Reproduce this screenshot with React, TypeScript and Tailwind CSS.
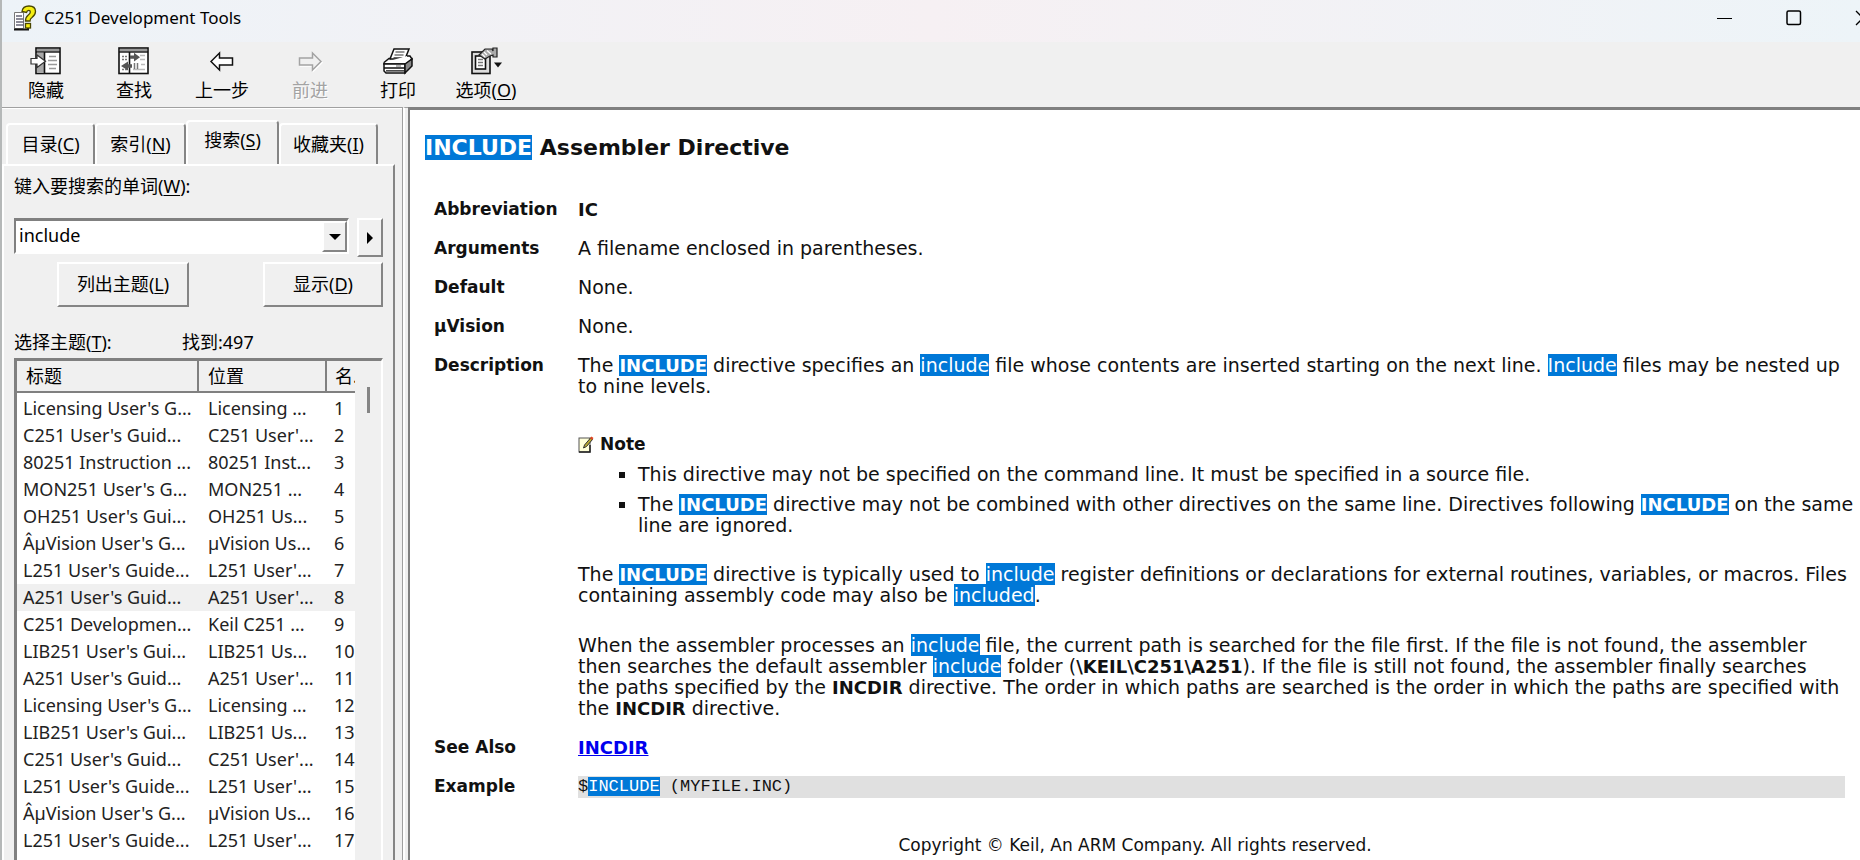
import type { ReactNode } from "react";

const rows: [string, string][] = [
  ["Licensing User's G...", "Licensing ..."],
  ["C251 User's Guid...", "C251 User'..."],
  ["80251 Instruction ...", "80251 Inst..."],
  ["MON251 User's G...", "MON251 ..."],
  ["OH251 User's Gui...", "OH251 Us..."],
  ["ÂµVision User's G...", "µVision Us..."],
  ["L251 User's Guide...", "L251 User'..."],
  ["A251 User's Guid...", "A251 User'..."],
  ["C251 Developmen...", "Keil C251 ..."],
  ["LIB251 User's Gui...", "LIB251 Us..."],
  ["A251 User's Guid...", "A251 User'..."],
  ["Licensing User's G...", "Licensing ..."],
  ["LIB251 User's Gui...", "LIB251 Us..."],
  ["C251 User's Guid...", "C251 User'..."],
  ["L251 User's Guide...", "L251 User'..."],
  ["ÂµVision User's G...", "µVision Us..."],
  ["L251 User's Guide...", "L251 User'..."],
  ["C251 User's Guid...", "C251 User'..."],
];

function Hit({ children }: { children: ReactNode }) {
  return <mark className="bg-[#0078d7] text-white">{children}</mark>;
}

function Strong({ children }: { children: ReactNode }) {
  return <b className="text-[18px]">{children}</b>;
}

function HelpIcon() {
  return (
    <svg width="24" height="26" viewBox="0 0 24 26" aria-hidden="true">
      <path d="M1.5 7.5h9v16h-9z" fill="#fff" stroke="#777" />
      <path d="M1 24.5h14v-6" fill="none" stroke="#111" strokeWidth="2" />
      <path d="M3 11h6M3 14h7M3 17h8M3 20h8" stroke="#667" strokeWidth="1.3" />
      <path
        d="M9 6.500C9.500 2.500 12.500 1 16 1c4 0 6.500 2 6.500 5.500 0 3-1.500 4.500-3.500 6-1.500 1-2 1.800-2 3.500h-4.500c0-3 .8-4.500 2.800-6 1.400-1 2-1.800 2-3 0-1-.6-1.600-1.600-1.600-1.200 0-1.900.7-2.200 2.100z"
        fill="#f5ee12"
        stroke="#4a4700"
        strokeWidth="1.3"
      />
      <rect x="12.500" y="18.500" width="5" height="4.500" fill="#f5ee12" stroke="#4a4700" strokeWidth="1.300" />
    </svg>
  );
}

function HideIcon() {
  return (
    <svg width="32" height="28" viewBox="0 0 32 28" aria-hidden="true">
      <rect x="6" y="1" width="24" height="25.500" fill="#fff" stroke="#111" strokeWidth="1.600" />
      <rect x="7" y="2" width="22" height="2.500" fill="#999" />
      <path d="M6 5h24" stroke="#111" strokeWidth="1.400" />
      <rect x="7" y="5.800" width="7" height="20" fill="#a8a8a8" />
      <path d="M14.500 5v21" stroke="#111" strokeWidth="1.600" />
      <path d="M19 9.500h7M18 13.500h9M18 17.500h9M19 21.500h7" stroke="#999" strokeWidth="1.500" />
      <path d="M1 11.500h6V8l8.500 6.200L7 20.500V17H1z" fill="#fff" stroke="#333" strokeWidth="1.200" />
    </svg>
  );
}

function LocateIcon() {
  return (
    <svg width="32" height="28" viewBox="0 0 32 28" aria-hidden="true">
      <rect x="1" y="1" width="29" height="25.500" fill="#fff" stroke="#111" strokeWidth="1.600" />
      <rect x="2" y="2" width="27" height="2.500" fill="#999" />
      <path d="M1 5h29" stroke="#111" strokeWidth="1.400" />
      <path d="M11.500 5v21" stroke="#111" strokeWidth="1.600" />
      <path d="M4 9.500h5M4 12.500h5M4 22.500h5" stroke="#777" strokeWidth="1.500" strokeDasharray="2 1" />
      <path d="M22 8.500h5M22 12.500h5M23 17.500h4M15 22.500h12" stroke="#bbb" strokeWidth="1.500" />
      <path d="M12 8.500h4V5.800l6 4.400-6 4.400v-2.800h-4z" fill="#555" />
      <path d="M14 17.300h-4v-2.800l-7 4.500 7 4.500v-2.800h4z" fill="#555" />
      <path d="M16.500 16v6M19.500 16v6" stroke="#777" strokeWidth="1.500" />
    </svg>
  );
}

function BackIcon() {
  return (
    <svg width="32" height="28" viewBox="0 0 32 28" aria-hidden="true">
      <path d="M5 14.500 13.500 6v5h13v7h-13v5z" fill="#fff" stroke="#111" strokeWidth="1.500" />
    </svg>
  );
}

function ForwardIcon() {
  return (
    <svg width="32" height="28" viewBox="0 0 32 28" aria-hidden="true">
      <path d="M27 14.500 18.500 6v5h-13v7h13v5z" fill="none" stroke="#fff" strokeWidth="1.500" transform="translate(1 1)" />
      <path d="M27 14.500 18.500 6v5h-13v7h13v5z" fill="#f0f0f0" stroke="#a3a3a3" strokeWidth="1.500" />
    </svg>
  );
}

function PrintIcon() {
  return (
    <svg width="32" height="28" viewBox="0 0 32 28" aria-hidden="true">
      <path d="M8 12 12 2h15l-4 10z" fill="#fff" stroke="#111" strokeWidth="1.500" />
      <path d="M13.500 5h9M12.500 8h9M11.500 10.800h9" stroke="#333" strokeWidth="1.200" />
      <path d="M2 15.500 7 11.500h2M25 9h3l2 3-6 5H2v-1.500" fill="#fff" stroke="#111" strokeWidth="1.500" />
      <path d="M2 17h21v9H4l-2-2z" fill="#fff" stroke="#111" strokeWidth="1.500" />
      <path d="M23 17l7-5v7l-7 7z" fill="#888" stroke="#111" strokeWidth="1.500" />
      <path d="M2 21h21M4 23.800h18" stroke="#111" strokeWidth="1.300" />
      <path d="M14 19h5" stroke="#888" strokeWidth="1.300" />
    </svg>
  );
}

function OptionsIcon() {
  return (
    <svg width="32" height="28" viewBox="0 0 32 28" aria-hidden="true">
      <rect x="2" y="5" width="18" height="21.500" fill="#ddd" stroke="#111" strokeWidth="1.600" />
      <rect x="5.500" y="9" width="10" height="13" fill="#fff" stroke="#111" strokeWidth="1.600" />
      <path d="M8 12.500h5M8 15.500h5M8 18.500h5" stroke="#777" strokeWidth="1.300" />
      <path d="M9 8 15 2h7l1 2V1h4v9h-4V8l-3 1-5 3-3-2z" fill="#aaa" stroke="#222" strokeWidth="1.200" />
      <path d="M12 7l3 3M14 5l3 3M17 3.500l4 3.500" stroke="#fff" strokeWidth="1.200" />
      <path d="M24 15.500h8l-4 5z" fill="#111" />
    </svg>
  );
}

function NoteIcon() {
  return (
    <svg width="16" height="17" viewBox="0 0 16 17" aria-hidden="true">
      <rect x="1" y="2" width="11" height="14" fill="#ffffd8" stroke="#555" />
      <path d="M1 16h11V9" fill="none" stroke="#222" strokeWidth="1.500" />
      <path d="m5.500 12 1-3 6-7 2 1.500-6 7z" fill="#b8a830" stroke="#333" />
      <path d="m12 2 1.500-1.500 2 1.500L14 4z" fill="#e0441f" />
    </svg>
  );
}

const tools = [
  { label: "隐藏", icon: <HideIcon /> },
  { label: "查找", icon: <LocateIcon /> },
  { label: "上一步", icon: <BackIcon /> },
  { label: "前进", icon: <ForwardIcon />, disabled: true },
  { label: "打印", icon: <PrintIcon /> },
  { label: "选项", access: "O", icon: <OptionsIcon /> },
];

function Access({ k }: { k: string }) {
  return (
    <>
      (<span className="underline underline-offset-2">{k}</span>)
    </>
  );
}

const raised = "border-2 border-t-white border-l-white border-r-[#858585] border-b-[#858585] bg-[#f0f0f0]";

function Tab({ label, k, active = false, className }: { label: string; k: string; active?: boolean; className: string }) {
  return (
    <button
      role="tab"
      aria-selected={active}
      className={`${className} ${active ? "h-[46px] pb-2" : "h-[41px]"} rounded-t-sm border-t-2 border-r-2 border-l-2 border-t-white border-r-[#858585] border-l-white text-center whitespace-nowrap`}
    >
      {label}
      <Access k={k} />
    </button>
  );
}

function Row({ name, children }: { name: string; children: ReactNode }) {
  return (
    <tr>
      <th scope="row" className="pb-[18px] text-left align-top text-[17px] font-bold">
        {name}
      </th>
      <td className="pb-[18px] align-top whitespace-nowrap">{children}</td>
    </tr>
  );
}

export default function App() {
  return (
    <div className="flex h-screen overflow-hidden bg-[#f0f0f0] font-['Noto_Sans','Noto_Sans_CJK_SC',sans-serif] text-[17px] text-black">
      <div className="w-[2px] shrink-0 bg-[#b5b8b8]" />
      <div className="flex min-w-0 flex-1 flex-col">
        <header className="flex h-[42px] shrink-0 items-center bg-linear-to-r from-[#edf3f8] via-[#f6f0f3] to-[#edf4f8] pb-[6px] pl-[11px]">
          <HelpIcon />
          <h1 className="ml-[7px] flex-1">C251 Development Tools</h1>
          <div className="-mr-[11px] flex shrink-0 gap-[53px]">
            <button aria-label="最小化">
              <svg width="16" height="16" viewBox="0 0 16 16"><path d="M0 8.500h15" stroke="#000" /></svg>
            </button>
            <button aria-label="最大化">
              <svg width="16" height="16" viewBox="0 0 16 16"><rect x="1" y="1" width="13.500" height="13.500" rx="1.500" fill="none" stroke="#000" strokeWidth="1.500" /></svg>
            </button>
            <button aria-label="关闭">
              <svg width="16" height="16" viewBox="0 0 16 16"><path d="m1 1 14 14M15 1 1 15" stroke="#000" strokeWidth="1.300" /></svg>
            </button>
          </div>
        </header>

        <nav className="flex h-[65px] shrink-0 pt-[5px] text-[18px]">
          {tools.map((t) => (
            <button
              key={t.label}
              disabled={t.disabled}
              className="flex w-[88px] flex-col items-center whitespace-nowrap disabled:text-[#a3a3a3] disabled:[text-shadow:1px_1px_0_#fff]"
            >
              {t.icon}
              <span className="mt-[2px] leading-[26px]">
                {t.label}
                {t.access && <Access k={t.access} />}
              </span>
            </button>
          ))}
        </nav>

        <div className="flex min-h-0 flex-1">
          <aside className="flex w-[401px] shrink-0 flex-col border-t border-r border-[#a0a0a0] pt-3 pr-[7px] text-[18px] shadow-[inset_0_1px_0_#fff]">
            <div role="tablist" className="-mb-[2px] flex shrink-0 items-end pl-1">
              <Tab label="目录" k="C" className="mb-[2px] w-[89px]" />
              <Tab label="索引" k="N" className="mb-[2px] w-[91px]" />
              <Tab label="搜索" k="S" active className="w-[93px] bg-[#f0f0f0]" />
              <Tab label="收藏夹" k="I" className="mb-[2px] w-[99px]" />
            </div>
            <section className="flex min-h-0 flex-1 flex-col border-t-2 border-r-2 border-l-2 border-t-white border-r-[#858585] border-l-white pr-[10px] pl-[10px]">
              <label htmlFor="word" className="mt-[7px] leading-[26px]">
                键入要搜索的单词<Access k="W" />:
              </label>
              <div className="mt-[19px] flex gap-[8px]">
                <div className="flex h-[36px] flex-1 border-2 border-t-3 border-t-[#808080] border-r-white border-b-white border-l-[#808080] bg-white">
                  <input id="word" defaultValue="include" className="min-w-0 flex-1 bg-white px-[3px] pb-[3px] outline-none" />
                  <button aria-label="展开" className={`flex w-[25px] items-center justify-center ${raised}`}>
                    <svg width="12" height="6" viewBox="0 0 12 6"><path d="M0 0h12L6 6z" /></svg>
                  </button>
                </div>
                <button aria-label="运算符" className={`flex h-[39px] w-[26px] items-center justify-center ${raised}`}>
                  <svg width="6" height="12" viewBox="0 0 6 12"><path d="M0 0v12l6-6z" /></svg>
                </button>
              </div>
              <div className="mt-[5px] flex justify-between pl-[43px]">
                <button className={`h-[45px] w-[132px] ${raised}`}>
                  列出主题<Access k="L" />
                </button>
                <button className={`h-[45px] w-[120px] ${raised}`}>
                  显示<Access k="D" />
                </button>
              </div>
              <div className="mt-[22px] flex shrink-0 leading-[26px]">
                <span className="w-[168px]">
                  选择主题<Access k="T" />:
                </span>
                <span>找到:497</span>
              </div>
              <div className="mt-[3px] flex min-h-0 flex-1 border-t-3 border-r-2 border-l-3 border-t-[#808080] border-r-white border-l-[#808080]">
                <div className="min-w-0 flex-1 overflow-hidden bg-white">
                  <table className="w-full table-fixed border-collapse text-[18px]">
                    <thead>
                      <tr className="h-[31px] border-b-2 border-[#808080] bg-[#f0f0f0] text-left whitespace-nowrap">
                        <th className="w-[181px] border-r-2 border-[#808080] p-0 pl-[9px] font-normal">标题</th>
                        <th className="w-[128px] border-r-2 border-[#808080] p-0 pl-[9px] font-normal">位置</th>
                        <th className="overflow-hidden p-0 pl-[8px] font-normal">名...</th>
                      </tr>
                    </thead>
                    <tbody>
                      <tr className="h-[3px]"><td colSpan={3} className="p-0" /></tr>
                      {rows.map(([title, place], i) => (
                        <tr key={i} className={`h-[27px] leading-[27px] whitespace-nowrap text-[#222] ${i === 7 ? "bg-[#f0f0f0]" : ""}`}>
                          <td className="overflow-hidden p-0 pl-[6px]">{title}</td>
                          <td className="overflow-hidden p-0 pl-[10px]">{place}</td>
                          <td className="overflow-hidden p-0 pl-[8px]">{i + 1}</td>
                        </tr>
                      ))}
                    </tbody>
                  </table>
                </div>
                <div className="flex w-[26px] shrink-0 justify-center pt-[26px]">
                  <div className="h-[26px] w-[3px] bg-[#858585]" />
                </div>
              </div>
            </section>
          </aside>
          <div className="w-[5px] shrink-0 border-t border-t-[#a0a0a0] border-l-2 border-l-white" />
          <main className="min-w-0 flex-1 overflow-hidden border-t-3 border-l-2 border-[#808080] bg-white px-[15px] pt-[24px] font-['DejaVu_Sans',sans-serif] text-[19px] leading-[21px] text-[#111]">
            <h2 className="text-[22px] leading-[27px] font-bold">
              <Hit>INCLUDE</Hit> Assembler Directive
            </h2>
            <div className="mt-[38px] pl-[9px]">
              <table className="w-full table-fixed border-collapse">
                <colgroup>
                  <col className="w-[144px]" />
                  <col />
                </colgroup>
                <tbody>
                  <Row name="Abbreviation"><Strong>IC</Strong></Row>
                  <Row name="Arguments">A filename enclosed in parentheses.</Row>
                  <Row name="Default">None.</Row>
                  <Row name="µVision">None.</Row>
                  <Row name="Description">
                    <p>
                      The <Strong><Hit>INCLUDE</Hit></Strong> directive specifies an <Hit>include</Hit> file whose contents are inserted starting on the next line. <Hit>Include</Hit> files may be nested up<br />
                      to nine levels.
                    </p>
                    <h3 className="mt-[37px] flex items-center gap-[6px] text-[17px] font-bold">
                      <NoteIcon /> Note
                    </h3>
                    <ul className="mt-[9px] flex list-[square] flex-col gap-[9px] pl-[60px]">
                      <li>This directive may not be specified on the command line. It must be specified in a source file.</li>
                      <li>
                        The <Strong><Hit>INCLUDE</Hit></Strong> directive may not be combined with other directives on the same line. Directives following <Strong><Hit>INCLUDE</Hit></Strong> on the same<br />
                        line are ignored.
                      </li>
                    </ul>
                    <p className="mt-[28px]">
                      The <Strong><Hit>INCLUDE</Hit></Strong> directive is typically used to <Hit>include</Hit> register definitions or declarations for external routines, variables, or macros. Files<br />
                      containing assembly code may also be <Hit>included</Hit>.
                    </p>
                    <p className="mt-[29px]">
                      When the assembler processes an <Hit>include</Hit> file, the current path is searched for the file first. If the file is not found, the assembler<br />
                      then searches the default assembler <Hit>include</Hit> folder (<Strong>\KEIL\C251\A251</Strong>). If the file is still not found, the assembler finally searches<br />
                      the paths specified by the <Strong>INCDIR</Strong> directive. The order in which paths are searched is the order in which the paths are specified with<br />
                      the <Strong>INCDIR</Strong> directive.
                    </p>
                  </Row>
                  <Row name="See Also">
                    <a href="#incdir" className="text-[18px] font-bold text-[#0000ee] underline">INCDIR</a>
                  </Row>
                  <Row name="Example">
                    <pre className="bg-[#e0e0e0] font-['Liberation_Mono',monospace] text-[17px] leading-[22px]">$<Hit>INCLUDE</Hit> (MYFILE.INC)</pre>
                  </Row>
                </tbody>
              </table>
            </div>
            <footer className="mt-[19px] text-center text-[17px]">Copyright © Keil, An ARM Company. All rights reserved.</footer>
          </main>
        </div>
      </div>
    </div>
  );
}
